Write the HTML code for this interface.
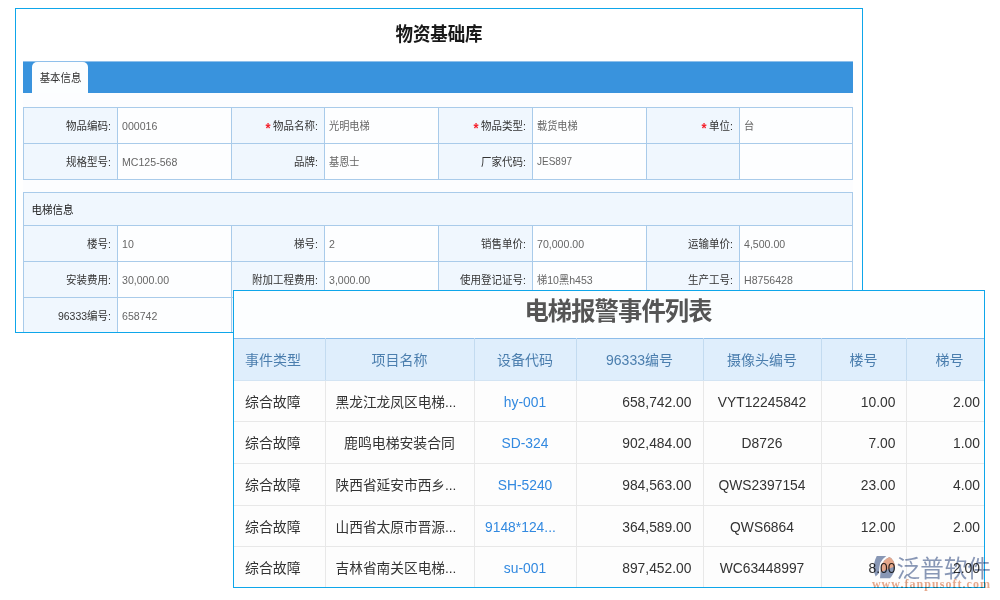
<!DOCTYPE html>
<html lang="zh-CN">
<head>
<meta charset="utf-8">
<title>物资基础库</title>
<style>
*{box-sizing:border-box;margin:0;padding:0}
html,body{width:1000px;height:600px;background:#fff;overflow:hidden}
body{position:relative;font-family:"Liberation Sans","Noto Sans CJK SC",sans-serif;}
#p1{position:absolute;left:15px;top:8px;width:848px;height:325px;border:1px solid #0ea6ea;background:#fff;overflow:hidden}
#p1 .inner{position:absolute;left:7px;top:52px;width:830px;height:280px;background:#fcfdff}
#p1 h1{position:absolute;left:0;top:14px;width:846px;text-align:center;font-size:17.5px;line-height:24px;font-weight:bold;color:#181818;letter-spacing:-0.1px}
#bar{position:absolute;left:7px;top:52px;width:830px;height:32px;background:#3993dd;border-top:1px solid #8fc0eb}
#tab{position:absolute;left:9px;top:0px;width:56px;height:31px;background:#fcfeff;border-radius:5px 5px 0 0;font-size:10.4px;line-height:33px;padding-left:1px;text-align:center;color:#333}
table.f{position:absolute;left:7px;border-collapse:collapse;table-layout:fixed;width:830px;font-size:10.5px}
table.f td{border:1px solid #a9cbea;height:36px;vertical-align:middle;white-space:nowrap;overflow:hidden}
table.f td.l{background:#f0f7fe;text-align:right;padding-right:6px;color:#333}
table.f td.v{background:#fdfeff;text-align:left;padding-left:4px;color:#666;font-size:10.2px}
table.f td.v.n,table.f td.v .n{font-size:10.6px}
table.f td.h{background:#f0f7fe;height:33px;text-align:left;padding-left:7.5px;color:#222}
.req{color:#f5222d;margin-right:2.5px;font-size:13px;font-weight:bold;line-height:0;position:relative;top:1.6px}
#p2{position:absolute;left:233px;top:290px;width:752px;height:298px;border:1px solid #0ea6ea;background:#fcfeff;overflow:hidden}
#p2 h2{position:absolute;left:0;top:4.5px;width:768px;text-align:center;font-size:24.3px;letter-spacing:-0.9px;line-height:32px;font-weight:bold;color:#555}
table.g{position:absolute;left:-1px;top:47px;border-collapse:collapse;table-layout:fixed;width:760px;font-size:13.85px}
table.g th{font-size:14px;background:#dfeefc;color:#4b7eae;font-weight:normal;height:42px;border-top:1px solid #8cbdea;border-right:1px solid #c3dbf0;border-bottom:1px solid #d3e4f3;white-space:nowrap}
table.g td{height:42px;padding-top:1.5px;border-right:1px solid #e8e8e8;border-bottom:1px solid #e8e8e8;color:#333;white-space:nowrap;overflow:hidden;background:#fdfdfd}
table.g td.c{text-align:center}
table.g td.e{text-align:left;padding-left:10px;font-size:13.7px}
table.g td.r{text-align:right;padding-right:11px}
table.g td.t{text-align:left;padding-left:12px;font-size:13.9px}
table.g td.a{color:#3289e0;text-align:center}
.s{display:inline-block;transform:scaleY(1.1);transform-origin:50% 55%}
#p2 .s{transform:translateY(-0.6px) scaleY(1.10)}
#p2 .s.k{transform:translateY(-1.3px)}
#p2 th .s.k{transform:translateY(-1px)}
#p2 th .n{display:inline-block;transform:translateY(-0.7px) scaleY(1.1)}
#p2 h2 .s.k{transform:scaleY(1.01)}
table.g tr.r41 td{height:41px}
table.g td.r:last-child{padding-right:12.5px}
table.g td.r:nth-child(6){padding-right:10px}
#wm{position:absolute;left:868px;top:548px;width:132px;height:48px;opacity:.92;mix-blend-mode:multiply}
</style>
</head>
<body>
<div id="p1">
  <div class="inner"></div>
  <h1><span class="s">物资基础库</span></h1>
  <div id="bar"><div id="tab"><span class="s">基本信息</span></div></div>
  <table class="f" style="top:98px">
    <colgroup><col style="width:94px"><col style="width:114px"><col style="width:93px"><col style="width:114px"><col style="width:94px"><col style="width:114px"><col style="width:93px"><col style="width:113px"></colgroup>
    <tr><td class="l"><span class="s">物品编码:</span></td><td class="v n"><span class="s">000016</span></td><td class="l"><span class="s"><span class="req">*</span>物品名称:</span></td><td class="v"><span class="s">光明电梯</span></td><td class="l"><span class="s"><span class="req">*</span>物品类型:</span></td><td class="v"><span class="s">载货电梯</span></td><td class="l"><span class="s"><span class="req">*</span>单位:</span></td><td class="v"><span class="s">台</span></td></tr>
    <tr><td class="l"><span class="s">规格型号:</span></td><td class="v n"><span class="s">MC125-568</span></td><td class="l"><span class="s">品牌:</span></td><td class="v"><span class="s">基恩士</span></td><td class="l"><span class="s">厂家代码:</span></td><td class="v n" style="font-size:10px"><span class="s">JES897</span></td><td class="l"></td><td class="v"></td></tr>
  </table>
  <table class="f" style="top:183px">
    <colgroup><col style="width:94px"><col style="width:114px"><col style="width:93px"><col style="width:114px"><col style="width:94px"><col style="width:114px"><col style="width:93px"><col style="width:113px"></colgroup>
    <tr><td class="h" colspan="8"><span class="s">电梯信息</span></td></tr>
    <tr><td class="l"><span class="s">楼号:</span></td><td class="v n"><span class="s">10</span></td><td class="l"><span class="s">梯号:</span></td><td class="v n"><span class="s">2</span></td><td class="l"><span class="s">销售单价:</span></td><td class="v n"><span class="s">70,000.00</span></td><td class="l"><span class="s">运输单价:</span></td><td class="v n"><span class="s">4,500.00</span></td></tr>
    <tr><td class="l"><span class="s">安装费用:</span></td><td class="v n"><span class="s">30,000.00</span></td><td class="l"><span class="s">附加工程费用:</span></td><td class="v n"><span class="s">3,000.00</span></td><td class="l"><span class="s">使用登记证号:</span></td><td class="v"><span class="s">梯<span class="n">10</span>黑<span class="n">h453</span></span></td><td class="l"><span class="s">生产工号:</span></td><td class="v n"><span class="s">H8756428</span></td></tr>
    <tr><td class="l"><span class="s">96333编号:</span></td><td class="v n"><span class="s">658742</span></td><td class="l"></td><td class="v"></td><td class="l"></td><td class="v"></td><td class="l"></td><td class="v"></td></tr>
  </table>
</div>
<div id="p2">
  <h2><span class="s k">电梯报警事件列表</span></h2>
  <table class="g">
    <colgroup><col style="width:92px"><col style="width:149px"><col style="width:102px"><col style="width:127px"><col style="width:118px"><col style="width:85px"><col style="width:87px"></colgroup>
    <tr><th style="text-align:left;padding-left:12px"><span class="s k">事件类型</span></th><th><span class="s k">项目名称</span></th><th><span class="s k">设备代码</span></th><th><span class="s k"><span class="n">96333</span>编号</span></th><th><span class="s k">摄像头编号</span></th><th><span class="s k">楼号</span></th><th><span class="s k">梯号</span></th></tr>
    <tr class="r41"><td class="t"><span class="s k">综合故障</span></td><td class="e"><span class="s k">黑龙江龙凤区电梯...</span></td><td class="a"><span class="s">hy-001</span></td><td class="r"><span class="s">658,742.00</span></td><td class="c"><span class="s">VYT12245842</span></td><td class="r"><span class="s">10.00</span></td><td class="r"><span class="s">2.00</span></td></tr>
    <tr><td class="t"><span class="s k">综合故障</span></td><td class="c"><span class="s k">鹿鸣电梯安装合同</span></td><td class="a"><span class="s">SD-324</span></td><td class="r"><span class="s">902,484.00</span></td><td class="c"><span class="s">D8726</span></td><td class="r"><span class="s">7.00</span></td><td class="r"><span class="s">1.00</span></td></tr>
    <tr><td class="t"><span class="s k">综合故障</span></td><td class="e"><span class="s k">陕西省延安市西乡...</span></td><td class="a"><span class="s">SH-5240</span></td><td class="r"><span class="s">984,563.00</span></td><td class="c"><span class="s">QWS2397154</span></td><td class="r"><span class="s">23.00</span></td><td class="r"><span class="s">4.00</span></td></tr>
    <tr class="r41"><td class="t"><span class="s k">综合故障</span></td><td class="e"><span class="s k">山西省太原市晋源...</span></td><td class="a" style="text-align:left;padding-left:10.5px"><span class="s">9148*124...</span></td><td class="r"><span class="s">364,589.00</span></td><td class="c"><span class="s">QWS6864</span></td><td class="r"><span class="s">12.00</span></td><td class="r"><span class="s">2.00</span></td></tr>
    <tr><td class="t"><span class="s k">综合故障</span></td><td class="e"><span class="s k">吉林省南关区电梯...</span></td><td class="a"><span class="s">su-001</span></td><td class="r"><span class="s">897,452.00</span></td><td class="c"><span class="s">WC63448997</span></td><td class="r"><span class="s">8.00</span></td><td class="r"><span class="s">2.00</span></td></tr>
  </table>
</div>
<div id="wm">
  <svg width="132" height="48" viewBox="868 548 132 48">
    <path d="M876.75 556 L886.25 556 Q882 559 880.2 563 Q879.2 567 879.1 570 L878.7 573.5 L875.6 576.6 Q873 570 873.8 565 Q874.6 560 876.75 556 Z" fill="#7f8fb1"/>
    <path d="M880 578.3 Q880.3 571 881.6 565 Q884 559.5 889.5 557 Q893.8 559.5 895 566 Q894.8 573 890 578.3 Z" fill="#7f8fb1"/>
    <path d="M880.8 572.2 Q881 568 881.6 565 Q884 559.5 889.5 557 Q893.8 559.5 895 566 L895 566.3 Z" fill="#e5a283"/>
    <text x="896.6" y="576.6" font-family="'Noto Sans CJK SC','Liberation Sans',sans-serif" font-size="23.6" fill="#7f8fb1">泛普软件</text>
    <text x="871.9" y="588" font-family="'Liberation Serif',serif" font-size="12" font-weight="bold" fill="#e5a283" letter-spacing="1.05">www.fanpusoft.com</text>
  </svg>
</div>
</body>
</html>
